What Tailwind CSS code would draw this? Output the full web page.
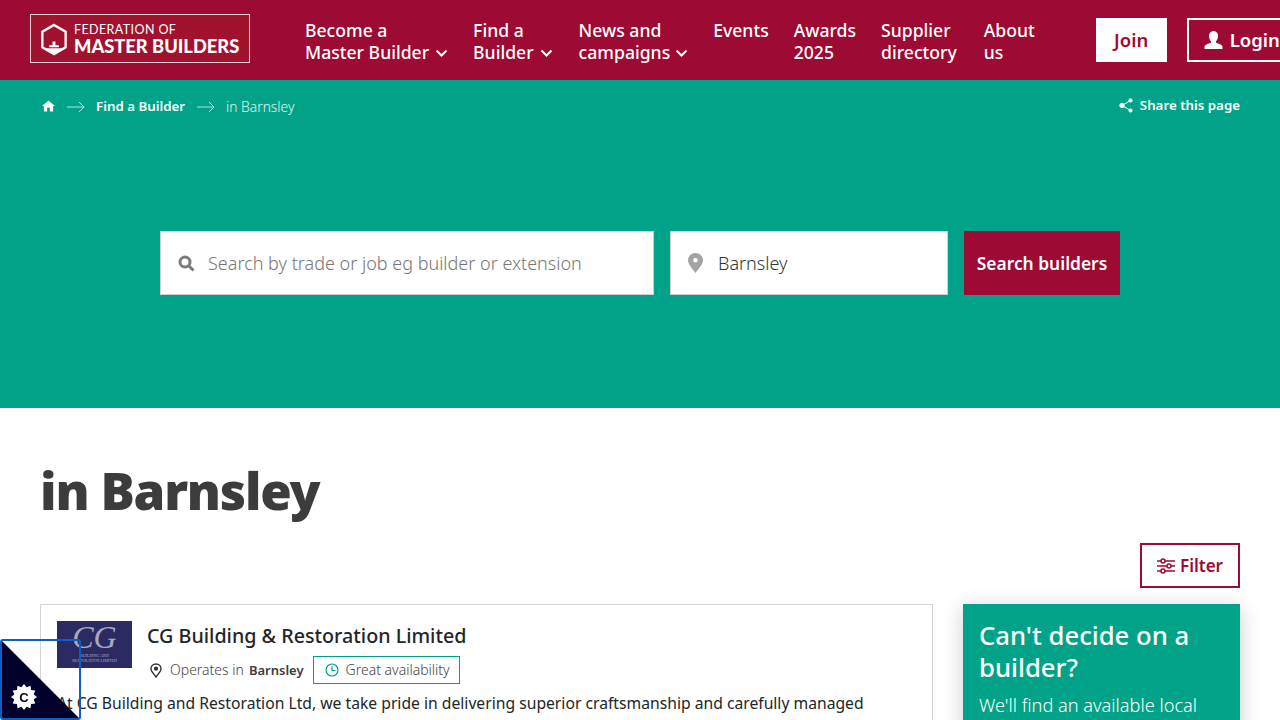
<!DOCTYPE html>
<html lang="en">

<head>
    <meta charset="UTF-8">
    <meta name="viewport" content="width=device-width, initial-scale=1.0">
    <title>Find a Builder in Barnsley</title>
    <script src="https://cdn.jsdelivr.net/npm/@tailwindcss/browser@4"></script>
</head>

<body class="h-[720px] overflow-hidden bg-white font-['Noto_Sans',sans-serif] text-[#3c3c3c]">
    <!-- header -->
    <header class="flex h-20 w-[1320px] items-center bg-[#9d0a33] text-white">
        <a class="mb-[3px] ml-[30px] flex h-[49px] w-[220px] shrink-0 items-center border border-white/80 bg-[#a1122f] pl-[9px]">
            <svg class="mt-px h-[33px] w-[28px]" viewBox="0 0 28 34" fill="none">
                <path d="M14 2 L26 9 V25 L14 32 L2 25 V9 Z" stroke="#fff" stroke-width="2.4" />
                <path d="M12.5 23 V19 H15.5 V23 H19 V25 H9 V23 Z" fill="#fff" />
                <path d="M4 26 L14 26 L24 26 L14 31.5 Z" fill="#fff" />
            </svg>
            <div class="ml-[6px] font-['Lato',sans-serif]">
                <div class="mt-px text-[12.5px] leading-[14px] tracking-[0.4px] whitespace-nowrap">FEDERATION OF</div>
                <div class="text-[18.3px] leading-[18px] font-black whitespace-nowrap">MASTER BUILDERS</div>
            </div>
        </a>
        <nav class="ml-[55px] flex items-center gap-[25px] pt-[1px] text-[17.6px] leading-[22px] font-medium">
            <a class="block">Become a<br><span class="inline-flex items-center gap-[6px]">Master Builder
                    <svg class="mt-[3px] h-[8px] w-[13px]" viewBox="0 0 13 8" fill="none"><path d="M1.5 1.5 L6.5 6.5 L11.5 1.5" stroke="#fff" stroke-width="2" /></svg></span></a>
            <a class="block">Find a<br><span class="inline-flex items-center gap-[6px]">Builder
                    <svg class="mt-[3px] h-[8px] w-[13px]" viewBox="0 0 13 8" fill="none"><path d="M1.5 1.5 L6.5 6.5 L11.5 1.5" stroke="#fff" stroke-width="2" /></svg></span></a>
            <a class="ml-px block">News and<br><span class="inline-flex items-center gap-[5px]">campaigns
                    <svg class="mt-[3px] h-[8px] w-[13px]" viewBox="0 0 13 8" fill="none"><path d="M1.5 1.5 L6.5 6.5 L11.5 1.5" stroke="#fff" stroke-width="2" /></svg></span></a>
            <a class="block self-start">Events</a>
            <a class="block">Awards<br>2025</a>
            <a class="block">Supplier<br>directory</a>
            <a class="ml-[2px] block">About<br>us</a>
        </nav>
        <a class="ml-[61px] flex h-11 w-[71px] shrink-0 items-center justify-center bg-white text-[18.5px] font-semibold text-[#9d0a33]">Join</a>
        <a class="ml-[20px] flex h-11 w-[120px] shrink-0 items-center border-2 border-white pl-[15px] text-[18.5px] font-semibold">
            <svg class="mr-[7px] h-[18px] w-[19px]" viewBox="0 0 19 18" fill="#fff">
                <path d="M9.5 0 C12.5 0 14 2.2 14 5 C14 7.5 13 9.3 12 10.3 V11.8 C14.5 12.8 18 13.6 18.5 15.5 V18 H0.5 V15.5 C1 13.6 4.5 12.8 7 11.8 V10.3 C6 9.3 5 7.5 5 5 C5 2.2 6.5 0 9.5 0 Z" />
            </svg>Login</a>
    </header>

    <!-- hero -->
    <section class="h-[328px] bg-[#00a387] text-white">
        <div class="flex h-[53px] items-center justify-between px-10 text-[13.3px]">
            <div class="flex items-center">
                <svg class="-mt-px ml-[2px] h-[12px] w-[13px]" viewBox="0 0 14 12" fill="#fff"><path d="M7 0 L14 6 H12 V12 H8.5 V8 H5.5 V12 H2 V6 H0 Z" /></svg>
                <svg class="mr-[11px] ml-[12px] h-[12px] w-[18px]" viewBox="0 0 18 12" fill="none" stroke="#fff" stroke-opacity="0.7"><path d="M0 6 H17 M12 1 L17 6 L12 11" /></svg>
                <span class="font-semibold">Find a Builder</span>
                <svg class="mr-[11px] ml-[12px] h-[12px] w-[18px]" viewBox="0 0 18 12" fill="none" stroke="#fff" stroke-opacity="0.7"><path d="M0 6 H17 M12 1 L17 6 L12 11" /></svg>
                <span class="mt-px text-[13.8px] font-light text-white/90">in Barnsley</span>
            </div>
            <div class="mb-[1px] flex items-center gap-[7px] font-semibold">
                <svg class="-mt-[2px] h-[15px] w-[14px]" viewBox="0 0 14 15" fill="#fff" stroke="#fff">
                    <circle cx="3" cy="7.5" r="2.2" /><circle cx="11.5" cy="2.5" r="1.6" /><circle cx="11.5" cy="12.5" r="1.6" />
                    <path d="M3 7.5 L11.5 2.5 M3 7.5 L11.5 12.5" fill="none" />
                </svg>
                Share this page
            </div>
        </div>
        <div class="mt-[98px] flex justify-center gap-4 text-[18px]">
            <div class="flex h-16 w-[494px] items-center border border-[#cfcfcf] bg-white pl-[17px]">
                <svg class="mr-[13px] h-[17px] w-[17px]" viewBox="0 0 17 17" fill="none" stroke="#7b7b7b" stroke-width="3">
                    <circle cx="7" cy="7" r="5" /><path d="M10.5 10.5 L15.5 15.5" />
                </svg>
                <span class="font-light text-[#767676]">Search by trade or job eg builder or extension</span>
            </div>
            <div class="flex h-16 w-[278px] items-center border border-[#cfcfcf] bg-white pl-[17px]">
                <svg class="mr-[15px] h-[20px] w-[15px]" viewBox="0 0 15 20" fill="#a3a3a3">
                    <path fill-rule="evenodd" d="M7.5 0 C11.6 0 15 3.2 15 7.2 C15 11.5 10 16 7.5 20 C5 16 0 11.5 0 7.2 C0 3.2 3.4 0 7.5 0 Z M7.5 5 A2.3 2.3 0 1 0 7.5 9.6 A2.3 2.3 0 1 0 7.5 5 Z" />
                </svg>
                <span class="font-light text-[#333]">Barnsley</span>
            </div>
            <div class="flex h-16 w-[156px] items-center justify-center bg-[#9d0a33] text-[17.4px] font-semibold">Search builders</div>
        </div>
    </section>

    <!-- results -->
    <main class="px-10">
        <h1 class="mt-[51px] text-[51px] leading-[62px] font-black tracking-[-1.2px]">in Barnsley</h1>
        <div class="mt-[22px] flex justify-end">
            <a class="flex h-[45px] w-[100px] items-center justify-center gap-[5px] border-2 border-[#9d0a33] text-[17px] font-semibold text-[#9d0a33]">
                <svg class="h-[16px] w-[18px]" viewBox="0 0 18 16" fill="none" stroke="#9d0a33" stroke-width="1.5">
                    <path d="M0 3 H18 M0 8 H18 M0 13 H18" />
                    <circle cx="6" cy="3" r="2" fill="#fff" /><circle cx="12" cy="8" r="2" fill="#fff" /><circle cx="6" cy="13" r="2" fill="#fff" />
                </svg>
                Filter
            </a>
        </div>
        <div class="mt-4 flex items-start justify-between">
            <article class="h-[200px] w-[893px] border border-[#d4d4d4] p-4">
                <div class="flex">
                    <div class="flex h-[47px] w-[75px] shrink-0 flex-col items-center bg-[#2b2a63] font-['Liberation_Serif',serif] text-white/60">
                        <span class="text-[32px] leading-[32px] italic">CG</span>
                        <span class="text-[4px] leading-[5px] whitespace-nowrap">BUILDING AND</span>
                        <span class="text-[4px] leading-[5px] whitespace-nowrap">RESTORATION LIMITED</span>
                    </div>
                    <div class="ml-[15px]">
                        <h2 class="text-[19.7px] leading-[30px] font-medium text-[#212529]">CG Building &amp; Restoration Limited</h2>
                        <div class="mt-[5px] flex items-center text-[14px] font-light text-[#444]">
                            <svg class="mr-[8px] ml-[3px] h-[15px] w-[12px]" viewBox="0 0 12 15" fill="none" stroke="#333" stroke-width="1.4">
                                <path d="M6 14 C4 11 1 8.5 1 5.7 C1 3 3.2 1 6 1 C8.8 1 11 3 11 5.7 C11 8.5 8 11 6 14 Z" /><circle cx="6" cy="5.7" r="1.4" fill="#333" />
                            </svg>
                            <span class="-mt-[2px]">Operates in</span> <b class="mt-px ml-[5px] text-[13px] font-semibold text-[#3c3c3c]">Barnsley</b>
                            <span class="ml-[9px] flex h-7 items-center border border-[#00a387] pr-[9px] pb-[2px] pl-[11px] text-[14px]">
                                <svg class="mt-[2px] mr-[7px] h-[14px] w-[14px]" viewBox="0 0 14 14" fill="none" stroke="#00a387" stroke-width="1.2">
                                    <circle cx="7" cy="7" r="6" /><path d="M7 3.5 V7.5 H10.5" />
                                </svg>
                                Great availability
                            </span>
                        </div>
                    </div>
                </div>
                <p class="mt-[7px] text-[15.7px] leading-6 whitespace-nowrap text-[#212529]">At CG Building and Restoration Ltd, we take pride in delivering superior craftsmanship and carefully managed</p>
            </article>
            <aside class="h-[200px] w-[277px] bg-[#00a387] p-4 text-white shadow-[0_4px_20px_rgba(0,0,0,0.2)]">
                <h3 class="text-[25.7px] leading-8 font-medium">Can't decide on a builder?</h3>
                <p class="mt-[9px] text-[18.2px] leading-6 font-light">We'll find an available local</p>
            </aside>
        </div>
    </main>

    <!-- cookie badge -->
    <div class="fixed bottom-0 left-0 h-[81px] w-[81px] overflow-hidden rounded-[3px] border-2 border-[#0a5fc4]">
        <div class="h-full w-full bg-[#00002b] [clip-path:polygon(0_0,100%_100%,0_100%)]"></div>
        <svg class="absolute bottom-[8px] left-[9px] h-[26px] w-[26px]" viewBox="0 0 26 26">
            <path fill="#fff" d="M13 0 L15.6 3.3 L19.5 1.7 L20.1 5.9 L24.3 6.5 L22.7 10.4 L26 13 L22.7 15.6 L24.3 19.5 L20.1 20.1 L19.5 24.3 L15.6 22.7 L13 26 L10.4 22.7 L6.5 24.3 L5.9 20.1 L1.7 19.5 L3.3 15.6 L0 13 L3.3 10.4 L1.7 6.5 L5.9 5.9 L6.5 1.7 L10.4 3.3 Z" />
            <text x="13" y="17.5" text-anchor="middle" font-size="13" font-weight="900" fill="#00002b" font-family="Liberation Sans">C</text>
        </svg>
    </div>
</body>

</html>
